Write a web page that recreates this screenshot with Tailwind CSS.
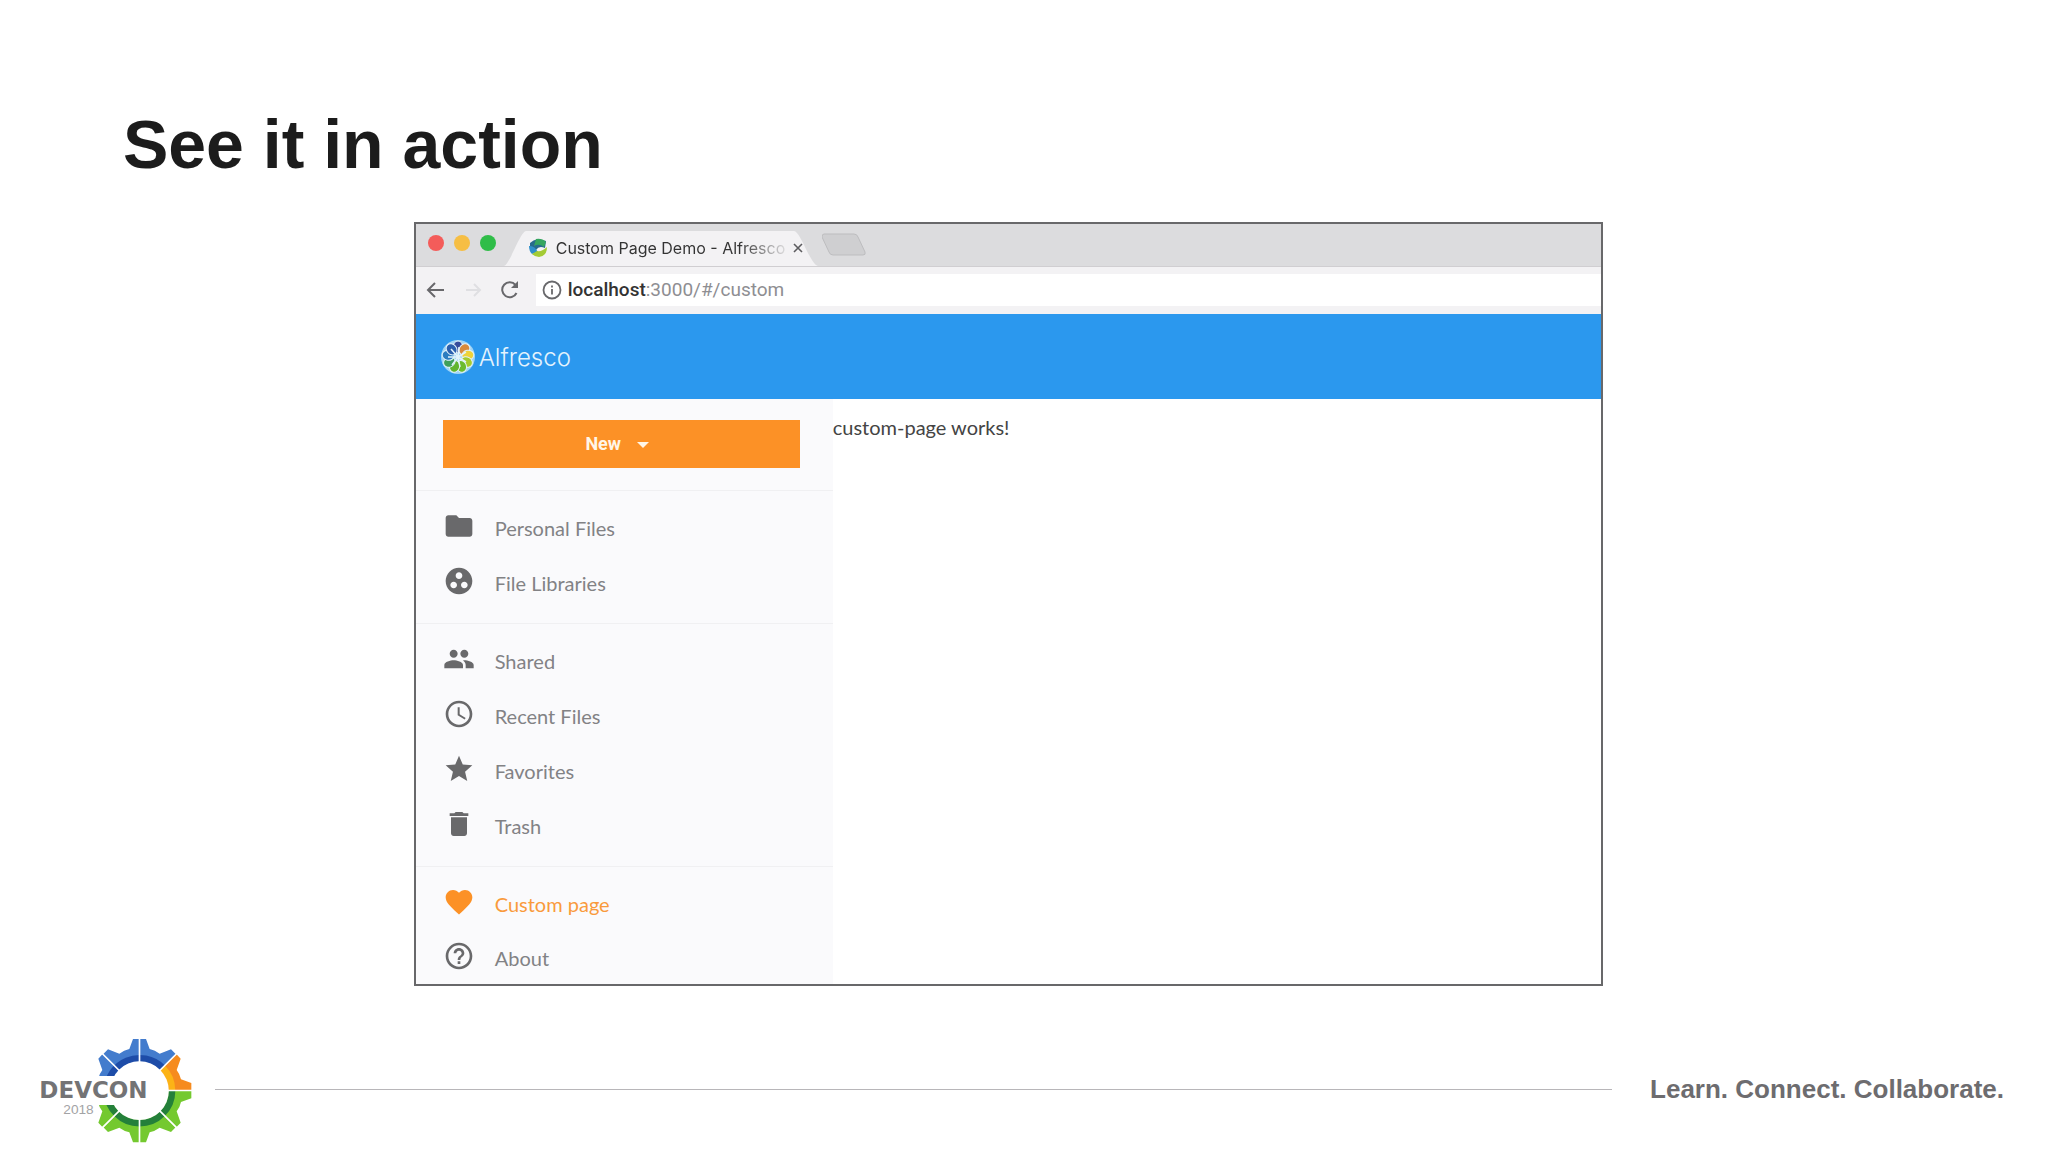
<!DOCTYPE html>
<html lang="en">
<head>
<meta charset="utf-8">
<title>See it in action</title>
<script src="https://cdn.jsdelivr.net/npm/@tailwindcss/browser@4"></script>
</head>
<body class="bg-white">
<div class="flex min-h-screen flex-col justify-between font-['Liberation_Sans',Arial,sans-serif]">
  <main class="pt-26">
    <h1 class="pl-[6%] text-[68px] leading-20 font-bold text-[#1c1c1c]">See it in action</h1>

    <section class="mt-[38px] ml-[20.2%] w-[58.05%] border-2 border-[#68686a] bg-white" aria-label="Browser window">
      <div class="flex h-[43px] items-end border-b border-[#d0ced1] bg-[#dcdcde]">
        <div class="flex gap-2.5 self-center pb-1 pl-3">
          <span class="size-4 rounded-full bg-[#f45c5a]"></span>
          <span class="size-4 rounded-full bg-[#f6be44]"></span>
          <span class="size-4 rounded-full bg-[#2fbd48]"></span>
        </div>
        <div class="relative ml-2 h-9 w-[314px]">
          <svg class="absolute inset-0 size-full" viewBox="0 0 314 36" preserveAspectRatio="none" aria-hidden="true"><path d="M0 36C6 34 16 2 22 1H290C297 2 306 34 314 36Z" fill="#f3f2f4"/></svg>
          <div class="relative flex h-full items-center gap-2 pl-6">
            <svg class="size-5 shrink-0" viewBox="0 0 20 20" aria-hidden="true"><path d="M2 5Q5 2 10 1L18 3 17 10Q11 7 8 12L2 12Z" fill="#276b8d"/><path d="M8 1Q14 0 18 4L16 9Q11 5 6 8Z" fill="#35a65e"/><path d="M1 8Q6 7 10 14L4 16Q1 13 1 8Z" fill="#2f8fcb"/><path d="M9 13Q14 14 19 9 19 18 11 19 7 19 4 16Z" fill="#a4cb35"/></svg>
            <span class="shrink-0 bg-linear-to-r from-[#333] from-80% to-[#33333320] bg-clip-text font-[Inter,sans-serif] text-base whitespace-nowrap text-transparent">Custom Page Demo - Alfresco</span>
            <button type="button" aria-label="Close tab"><svg class="size-2.5" viewBox="0 0 10 10" fill="none" stroke="#5c5c5f" stroke-width="1.6"><path d="M1 1l8 8M9 1L1 9"/></svg></button>
          </div>
        </div>
        <svg class="ml-1 h-6 w-11 self-center" viewBox="0 0 44 24" aria-hidden="true"><path d="M2 1H32Q35 1 36 4L43 19Q44 22 41 22H11Q8 22 7 19L0 4Q0 1 2 1Z" fill="#cfcfd1" stroke="#bdbdbf"/></svg>
      </div>

      <div class="flex h-[47px] items-center bg-[#f3f2f4] pb-0.5 pl-2.5">
        <button type="button" aria-label="Back"><svg class="size-5" viewBox="0 0 20 20" fill="none" stroke="#68686b" stroke-width="2"><path d="M18 10H2M9 3L2 10l7 7"/></svg></button>
        <button type="button" aria-label="Forward" class="ml-[18px]"><svg class="size-5" viewBox="0 0 20 20" fill="none" stroke="#dfdfe2" stroke-width="2"><path d="M2 10H16M10 4l6 6-6 6"/></svg></button>
        <button type="button" aria-label="Reload" class="ml-4"><svg class="size-5" viewBox="0 0 20 20" fill="none" stroke="#68686b" stroke-width="2"><path d="M16.5 13A7.5 7.5 0 1 1 15.500 5"/><path d="M18 1v7h-7z" fill="#68686b" stroke="none"/></svg></button>
        <div class="ml-4 flex h-8 grow items-center gap-1.5 bg-white pl-1.5">
          <svg class="size-5" viewBox="0 0 20 20" fill="none" stroke="#68686b" stroke-width="1.800" aria-hidden="true"><circle cx="10" cy="10" r="8.500"/><path d="M10 9v5.500M10 5.500v2"/></svg>
          <div class="font-[Roboto,sans-serif] text-[19px] leading-6 text-[#8e8e92]"><span class="font-medium text-[#333]">localhost</span>:3000/#/custom</div>
        </div>
      </div>

      <header class="flex h-[85px] items-center gap-[3px] bg-[#2b98ee] pl-6">
        <svg class="size-9" viewBox="-18 -18 36 36" aria-hidden="true">
          <circle r="17" fill="#9fd4f6"/>
          <g stroke="#e3f3fb" stroke-width="1">
            <ellipse cy="-10" rx="5" ry="6" fill="#364b9c"/>
            <ellipse cy="-10" rx="5" ry="6" fill="#d98a3c" transform="rotate(40)"/>
            <ellipse cy="-10" rx="5" ry="6" fill="#eed23b" transform="rotate(80)"/>
            <ellipse cy="-10" rx="5" ry="6" fill="#a5cb2e" transform="rotate(120)"/>
            <ellipse cy="-10" rx="5" ry="6" fill="#6cbb2f" transform="rotate(160)"/>
            <ellipse cy="-10" rx="5" ry="6" fill="#62b52f" transform="rotate(200)"/>
            <ellipse cy="-10" rx="5" ry="6" fill="#3f9f5b" transform="rotate(240)"/>
            <ellipse cy="-10" rx="5" ry="6" fill="#2c7cc0" transform="rotate(280)"/>
            <ellipse cy="-10" rx="5" ry="6" fill="#2b5fae" transform="rotate(320)"/>
          </g>
          <path d="M0 0L-7 -8M0 0L1 -10M0 0L8 -5M0 0L8 5M0 0L2 10M0 0L-6 8M0 0L-10 0" stroke="#e3f3fb" stroke-width="1.500"/>
        </svg>
        <span class="pt-0.5 font-[Inter,sans-serif] text-2xl font-light text-[#e4f3fd]">Alfresco</span>
      </header>

      <div class="flex">
        <aside class="w-[35.2%] divide-y divide-[#f0f0f2] bg-[#fafafc] font-[Lato,sans-serif] text-xl text-[#828285]">
          <div class="pt-[21px] pr-[33px] pb-[22px] pl-[27px]">
            <button type="button" class="flex h-12 w-full items-center justify-center gap-4 bg-[#fc9126] pr-2 font-[Roboto,sans-serif] text-lg font-bold text-[#fff6e8]">New<svg class="size-3" viewBox="0 0 12 12" fill="currentColor"><path d="M0 4h12L6 10z"/></svg></button>
          </div>
          <nav class="pt-[9px] pb-[13px]">
            <a href="#" class="flex h-[55px] items-center gap-5 pl-[27px]"><svg class="mb-1 size-8 shrink-0" viewBox="0 0 24 24" fill="#69696b"><path d="M10 4H4c-1.100 0-2 .9-2 2v12c0 1.100.9 2 2 2h16c1.100 0 2-.9 2-2V8c0-1.100-.9-2-2-2h-8l-2-2z"/></svg>Personal Files</a>
            <a href="#" class="flex h-[55px] items-center gap-5 pl-[27px]"><svg class="mb-1 size-8 shrink-0" viewBox="0 0 24 24" fill="#69696b"><path d="M12 2C6.480 2 2 6.480 2 12s4.480 10 10 10 10-4.480 10-10S17.520 2 12 2zM8 17.500c-1.380 0-2.500-1.120-2.500-2.500s1.120-2.500 2.500-2.500 2.500 1.120 2.500 2.500-1.120 2.500-2.500 2.500zM9.500 8c0-1.380 1.120-2.500 2.500-2.500s2.500 1.120 2.500 2.500-1.120 2.500-2.500 2.500S9.500 9.380 9.500 8zm6.500 9.500c-1.380 0-2.500-1.120-2.500-2.500s1.120-2.500 2.500-2.500 2.500 1.120 2.500 2.500-1.120 2.500-2.500 2.500z"/></svg>File Libraries</a>
          </nav>
          <nav class="pt-[9px] pb-[13px]">
            <a href="#" class="flex h-[55px] items-center gap-5 pl-[27px]"><svg class="mb-1 size-8 shrink-0" viewBox="0 0 24 24" fill="#69696b"><path d="M16 11c1.660 0 2.990-1.340 2.990-3S17.660 5 16 5c-1.660 0-3 1.340-3 3s1.340 3 3 3zm-8 0c1.660 0 2.990-1.340 2.990-3S9.660 5 8 5C6.340 5 5 6.340 5 8s1.340 3 3 3zm0 2c-2.330 0-7 1.170-7 3.500V19h14v-2.500c0-2.330-4.670-3.500-7-3.500zm8 0c-.29 0-.62.02-.97.05 1.160.84 1.970 1.970 1.970 3.450V19h6v-2.500c0-2.330-4.670-3.500-7-3.500z"/></svg>Shared</a>
            <a href="#" class="flex h-[55px] items-center gap-5 pl-[27px]"><svg class="mb-1 size-8 shrink-0" viewBox="0 0 24 24" fill="#69696b"><path d="M11.990 2C6.470 2 2 6.480 2 12s4.470 10 9.990 10C17.520 22 22 17.520 22 12S17.520 2 11.990 2zM12 20c-4.420 0-8-3.580-8-8s3.580-8 8-8 8 3.580 8 8-3.580 8-8 8zm.5-13H11v6l5.250 3.150.75-1.230-4.500-2.670z"/></svg>Recent Files</a>
            <a href="#" class="flex h-[55px] items-center gap-5 pl-[27px]"><svg class="mb-1 size-8 shrink-0" viewBox="0 0 24 24" fill="#69696b"><path d="M12 17.270L18.180 21l-1.640-7.030L22 9.240l-7.190-.61L12 2 9.190 8.630 2 9.240l5.460 4.730L5.820 21z"/></svg>Favorites</a>
            <a href="#" class="flex h-[55px] items-center gap-5 pl-[27px]"><svg class="mb-1 size-8 shrink-0" viewBox="0 0 24 24" fill="#69696b"><path d="M6 19c0 1.100.9 2 2 2h8c1.100 0 2-.9 2-2V7H6v12zM19 4h-3.500l-1-1h-5l-1 1H5v2h14V4z"/></svg>Trash</a>
          </nav>
          <nav class="pt-[9px]">
            <a href="#" class="flex h-[55px] items-center gap-5 pl-[27px] text-[#f99a3c]"><svg class="mb-1 size-8 shrink-0" viewBox="0 0 24 24" fill="#fc9126"><path d="M12 21.350l-1.450-1.320C5.400 15.360 2 12.280 2 8.500 2 5.420 4.420 3 7.500 3c1.740 0 3.410.81 4.500 2.090C13.090 3.810 14.760 3 16.500 3 19.580 3 22 5.420 22 8.500c0 3.780-3.400 6.860-8.550 11.540L12 21.350z"/></svg>Custom page</a>
            <a href="#" class="flex h-[53px] items-center gap-5 pl-[27px]"><svg class="mb-1 size-8 shrink-0" viewBox="0 0 24 24" fill="#69696b"><path d="M11 18h2v-2h-2v2zm1-16C6.480 2 2 6.480 2 12s4.480 10 10 10 10-4.480 10-10S17.520 2 12 2zm0 18c-4.410 0-8-3.590-8-8s3.590-8 8-8 8 3.590 8 8-3.590 8-8 8zm0-14c-2.210 0-4 1.790-4 4h2c0-1.100.9-2 2-2s2 .9 2 2c0 2-3 1.750-3 5h2c0-2.250 3-2.500 3-5 0-2.210-1.790-4-4-4z"/></svg>About</a>
          </nav>
        </aside>
        <p class="pt-3.5 font-[Lato,sans-serif] text-xl text-[#444]">custom-page works!</p>
      </div>
    </section>
  </main>

  <footer class="flex items-center pr-11 pl-5">
    <svg class="h-[132px] w-[220px] shrink-0" viewBox="0 0 660 396" role="img" aria-label="DevCon 2018">
      <defs>
        <path id="top" d="M358 57H378L389 87Q405 91 419 101L453 88 467 102 358 212Z"/>
        <path id="side" d="M358 212L469 102 482 116 470 150Q480 163 483 178L514 189V212Z"/>
      </defs>
      <use href="#top" fill="#437ccd"/>
      <use href="#top" fill="#437ccd" transform="matrix(-1 0 0 1 717 0)"/>
      <use href="#side" fill="#437ccd" transform="matrix(-1 0 0 1 717 0)"/>
      <use href="#side" fill="#f68b1e"/>
      <use href="#side" fill="#74c92f" transform="matrix(1 0 0 -1 0 424)"/>
      <use href="#side" fill="#74c92f" transform="matrix(-1 0 0 -1 717 424)"/>
      <use href="#top" fill="#74c92f" transform="matrix(1 0 0 -1 0 424)"/>
      <use href="#top" fill="#74c92f" transform="matrix(-1 0 0 -1 717 424)"/>
      <g fill="none" stroke-width="20">
        <path d="M261 212A97.500 97.500 0 0 1 427 143" stroke="#1d4ca8"/>
        <path d="M427 143A97.500 97.500 0 0 1 456 212" stroke="#fcb316"/>
        <path d="M456 212A97.500 97.500 0 0 1 261 212" stroke="#24803a"/>
      </g>
      <circle cx="358.500" cy="212" r="88" fill="#fff"/>
      <path d="M358.500 50V374M245 99L472 325M472 99L245 325M358 211.500H520" stroke="#fff" stroke-width="5"/>
      <path d="M195 168H300V255H195Z" fill="#fff"/>
      <text x="58" y="235" font-family="DejaVu Sans, sans-serif" font-size="69" font-weight="700" fill="#737375">DEVCON</text>
      <text x="130" y="283" font-family="Liberation Sans, sans-serif" font-size="41" fill="#a3a3a5">2018</text>
    </svg>
    <div class="mt-1.5 -ml-[25px] h-px grow bg-[#b8b6b9]"></div>
    <p class="mt-1.5 ml-[38px] text-[26px] leading-8 font-bold text-[#6d6c6f]">Learn. Connect. Collaborate.</p>
  </footer>
</div>
</body>
</html>
